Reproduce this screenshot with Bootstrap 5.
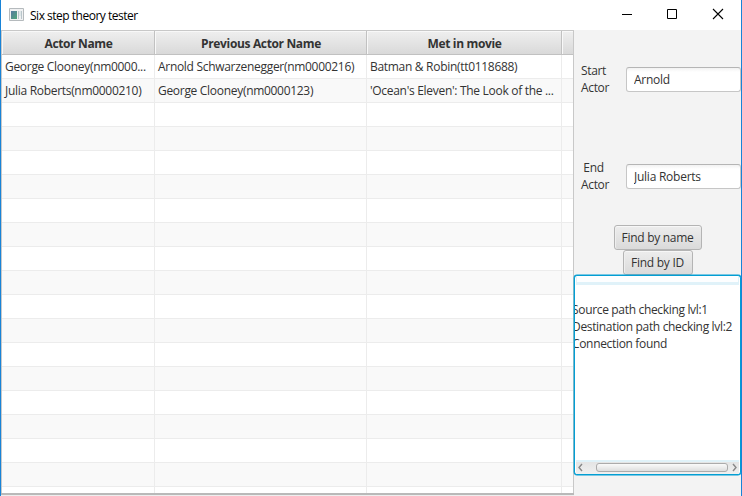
<!DOCTYPE html>
<html lang="en">
<head>
<meta charset="utf-8">
<title>Six step theory tester</title>
<link href="https://cdn.jsdelivr.net/npm/bootstrap@5.3.0/dist/css/bootstrap.min.css" rel="stylesheet">
<style>
body{font-family:"Open Sans","Noto Sans",sans-serif;font-size:12px;line-height:17px;letter-spacing:-.33px;color:#333;background:#fff}
.window{width:742px;height:496px;border-left:1px solid #1883d7;border-right:1px solid #1883d7}
.titlebar{height:30px;color:#000;padding-left:8px}
.titlebar .caption{margin-left:5px;letter-spacing:-.49px}
.winbtn{width:46px;height:30px}
.winbtn:last-child{margin-right:-1px}
.pane-left{width:573px;height:466px;background:#f3f3f3}
.grid-wrap{height:463px;border:1px solid #c8c8c8;border-bottom:0;background:#fff}
.actors{table-layout:fixed;width:571px;border-collapse:separate;border-spacing:0;margin:0;color:#333}
.actors th{height:24px;padding:2px 0 0 1px;text-align:center;font-weight:700;letter-spacing:-.35px;line-height:21px;background:linear-gradient(#efefef,#d9d9d9);border-right:1px solid #c1c1c1;border-bottom:1px solid #c1c1c1;box-shadow:inset 1px 1px #f8f8f8}
.actors td{height:24px;padding:0 3px;line-height:23px;letter-spacing:-.3px;border-right:1px solid #ececec;border-bottom:1px solid #ececec;white-space:nowrap;overflow:hidden}
.actors th:last-child,.actors td:last-child{border-right:0}
.actors tbody tr:nth-child(even) td{background:#f9f9f9}
.hbar{height:3px;border-top:2px solid #b9b9b9;background:#eee}
.pane-right{width:167px;height:466px;background:#f3f3f3}
.lbl{width:42px;margin-right:10px;padding-bottom:1px}
.lbl span{padding-right:3px}
.field-row{height:35px}
.start-row{margin-top:32px}
.end-row{margin-top:62px}
.buttons{margin-top:31px}
.field{width:115px;height:25px;border:1px solid #c6c6c6;border-top-color:#b5b5b5;border-radius:3px;background:linear-gradient(#f2f2f2,#fff 4px);padding:0 7px;color:#333;font:inherit;letter-spacing:-.25px}
.find{height:25px;border:1px solid #b4b4b4;border-radius:3px;background:linear-gradient(#ededed,#dadada);box-shadow:inset 0 1px #f7f7f7,inset 1px 0 #eee;padding:0;font:inherit;letter-spacing:-.28px;color:#333}
.find-name{width:88px}
.find-id{width:70px}
.log{width:167px;height:200px;border:1px solid #039ed3;border-radius:3px;background:#fff;box-shadow:0 0 0 .4px #039ed3;overflow:hidden}
.log-top{height:8px;margin:1px;border-bottom:3px solid #e0f2f9;background:#fdfeff;border-left:1px solid #e0f2f9;border-right:1px solid #e0f2f9}
.log-text{height:174px;padding-top:15px;margin-left:-3px;white-space:nowrap}
.scroll{height:14px;margin:0 1px;background:linear-gradient(#e0f2f9 2px,#e4e4e4 2px,#f0f0f0)}
.thumb{width:132px;height:9px;margin-right:1px;border:1px solid #ababab;border-radius:3px;background:linear-gradient(#fafafa,#dedede)}
</style>
<script src="https://cdn.jsdelivr.net/npm/bootstrap@5.3.0/dist/js/bootstrap.bundle.min.js"></script>
</head>
<body class="m-0 overflow-hidden">
<div class="window d-flex flex-column overflow-hidden">
  <header class="titlebar d-flex align-items-center flex-shrink-0">
    <svg width="16" height="14" viewBox="0 0 16 14"><defs><linearGradient id="g" x2="1" y2="1"><stop stop-color="#5679a0"/><stop offset="1" stop-color="#4fa779"/></linearGradient></defs><path d="M.5.5h14v12H.5z" fill="#f0f1f2" stroke="#b5babd"/><path d="M2 3h6v8H2z" fill="url(#g)"/><path d="M9 3h1v8H9zM12 3h1v8h-1z" fill="#b9c5ca"/><path d="M10 3h2v5h-2z" fill="#dfe7e9"/></svg>
    <span class="caption">Six step theory tester</span>
    <div class="d-flex ms-auto">
      <svg class="winbtn" viewBox="0 0 46 30"><path d="M18 14.500h10" stroke="#000"/></svg>
      <svg class="winbtn" viewBox="0 0 46 30"><path d="M17.500 9.500h9v9h-9z" fill="none" stroke="#000"/></svg>
      <svg class="winbtn" viewBox="0 0 46 30"><path d="M17 9l10 10M27 9L17 19" stroke="#000" stroke-width="1.100"/></svg>
    </div>
  </header>
  <main class="d-flex">
    <section class="pane-left flex-shrink-0">
      <div class="grid-wrap overflow-hidden">
        <table class="actors">
          <colgroup><col style="width:153px"><col style="width:212px"><col style="width:195px"><col></colgroup>
          <thead><tr><th>Actor Name</th><th>Previous Actor Name</th><th>Met in movie</th><th></th></tr></thead>
          <tbody id="rows">
            <tr><td>George Clooney(nm0000...</td><td>Arnold Schwarzenegger(nm0000216)</td><td>Batman &amp; Robin(tt0118688)</td><td></td></tr>
            <tr><td>Julia Roberts(nm0000210)</td><td>George Clooney(nm0000123)</td><td>'Ocean's Eleven': The Look of the ...</td><td></td></tr>
          </tbody>
        </table>
      </div>
      <div class="hbar"></div>
    </section>
    <aside class="pane-right d-flex flex-column">
      <div class="field-row start-row d-flex align-items-center">
        <label class="lbl text-center" for="start"><span>Start</span><br>Actor</label>
        <input id="start" class="field" value="Arnold">
      </div>
      <div class="field-row end-row d-flex align-items-center">
        <label class="lbl text-center" for="end"><span>End</span><br>Actor</label>
        <input id="end" class="field" value="Julia Roberts">
      </div>
      <div class="buttons d-flex flex-column align-items-center">
        <button class="find find-name">Find by name</button>
        <button class="find find-id">Find by ID</button>
      </div>
      <div class="log">
        <div class="log-top"></div>
        <div class="log-text">Source path checking lvl:1<br>Destination path checking lvl:2<br>Connection found</div>
        <div class="scroll d-flex align-items-center justify-content-between">
          <svg width="9" height="9" viewBox="0 0 9 9"><path d="M6 1L3 4.500l3 3.500" fill="none" stroke="#888" stroke-width="1.400"/></svg>
          <div class="thumb ms-auto"></div>
          <svg width="10" height="9" viewBox="0 0 10 9"><path d="M4 1l3 3.500L4 8" fill="none" stroke="#888" stroke-width="1.400"/></svg>
        </div>
      </div>
    </aside>
  </main>
</div>
<script>
// Empty rows fill the rest of the table viewport.
const rows = document.getElementById('rows');
for (let i = 0; i < 17; i++) {
  const tr = rows.insertRow();
  for (let c = 0; c < 4; c++) tr.insertCell();
}
</script>
</body>
</html>
